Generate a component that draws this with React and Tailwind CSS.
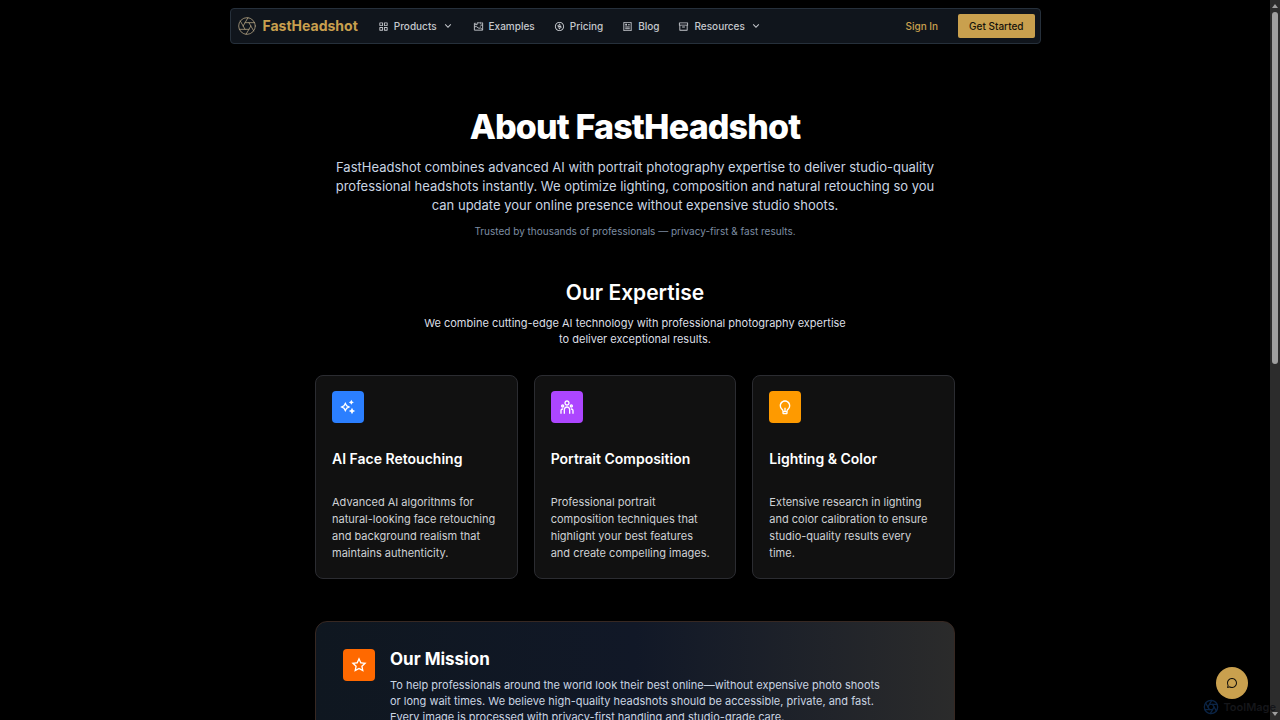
import { Aperture } from 'lucide-react';
import {
  RiArchiveLine,
  RiArrowDownSLine,
  RiArticleLine,
  RiChat3Line,
  RiFunctionLine,
  RiLightbulbLine,
  RiMoneyDollarCircleLine,
  RiSparkling2Line,
  RiStarLine,
  RiTeamLine,
} from 'react-icons/ri';

function ExamplesIcon({ className }) {
  return (
    <svg viewBox="0 0 24 24" fill="none" stroke="currentColor" strokeWidth="2" className={className}>
      <path d="M9 4v4H3v12h18V4h-2M3 8V5h3" />
      <path d="M9 4h6M17 2v5M21 9h-4" />
      <path d="M3 13l4-1 6 4 3-1 5 4M16 10v2" />
    </svg>
  );
}

const navItems = [
  { label: 'Products', icon: RiFunctionLine, menu: true },
  { label: 'Examples', icon: ExamplesIcon },
  { label: 'Pricing', icon: RiMoneyDollarCircleLine },
  { label: 'Blog', icon: RiArticleLine },
  { label: 'Resources', icon: RiArchiveLine, menu: true },
];

const expertise = [
  {
    title: 'AI Face Retouching',
    icon: RiSparkling2Line,
    color: 'bg-[#2b7fff]',
    text: 'Advanced AI algorithms for natural-looking face retouching and background realism that maintains authenticity.',
  },
  {
    title: 'Portrait Composition',
    icon: RiTeamLine,
    color: 'bg-[#ad46ff]',
    // non-breaking space keeps "and create" together on the last line
    text: 'Professional portrait composition techniques that highlight your best features and\u00a0create compelling images.',
  },
  {
    title: 'Lighting & Color',
    icon: RiLightbulbLine,
    color: 'bg-[#fe9a00]',
    text: 'Extensive research in lighting and color calibration to ensure studio-quality results every time.',
  },
];

function IconTile({ icon: Icon, color }) {
  return (
    <div className={`flex size-8 shrink-0 items-center justify-center rounded-sm text-white ${color}`}>
      <Icon className="size-4" />
    </div>
  );
}

function NavItem({ label, icon: Icon, menu }) {
  const Tag = menu ? 'button' : 'a';
  return (
    <Tag
      href={menu ? undefined : '#'}
      className="flex items-center gap-[5px] text-[10px] font-medium text-[#c5c8cd]"
    >
      <Icon className="size-[11px]" />
      {label}
      {menu && <RiArrowDownSLine className="size-3" />}
    </Tag>
  );
}

function Navbar() {
  return (
    <header className="mx-auto mt-2 flex h-9 w-full max-w-[811px] items-center rounded-sm border border-[#26303b] bg-[#10151c] pr-[5px] pl-[6px]">
      <a href="#" className="flex items-center gap-1.5 text-sm font-bold text-[#c9a04e]">
        <Aperture className="size-5 text-[#a99a7c]" strokeWidth={1} />
        FastHeadshot
      </a>
      <nav className="ml-5 flex items-center gap-[19px]">
        {navItems.map((item) => (
          <NavItem key={item.label} {...item} />
        ))}
      </nav>
      <div className="ml-auto flex items-center gap-5 text-[10px] font-medium">
        <a href="#" className="text-[#c9a04e]">Sign In</a>
        <button className="h-6 rounded-xs bg-[#c9a04e] px-[11px] text-[#15120c]">Get Started</button>
      </div>
    </header>
  );
}

function Scrollbar() {
  return (
    <div className="flex w-[10px] shrink-0 flex-col items-center justify-between bg-[#2c2c2c] py-1">
      <div className="flex flex-col items-center gap-1">
        <div className="border-x-3 border-b-4 border-x-transparent border-b-[#9f9f9f]" />
        <div className="h-[352px] w-[6px] rounded-full bg-[#9f9f9f]" />
      </div>
      <div className="border-x-3 border-t-4 border-x-transparent border-t-[#9f9f9f]" />
    </div>
  );
}

export default function App() {
  return (
    <div className="relative flex h-screen overflow-hidden bg-black font-['Inter',sans-serif] text-white">
      <div className="min-w-0 flex-1 overflow-hidden">
        <Navbar />
        <main className="mx-auto max-w-[640px] pt-16">
          <section className="text-center">
            <h1 className="text-[34px] leading-[38px] font-extrabold tracking-tight">About FastHeadshot</h1>
            <p className="mt-3 text-[13px] leading-[19px] text-[#cad5e2]">
              FastHeadshot combines advanced AI with portrait photography expertise to deliver studio-quality
              <br />
              professional headshots instantly. We optimize lighting, composition and natural retouching so you
              <br />
              can update your online presence without expensive studio shoots.
            </p>
            <p className="mt-2 text-[10px] leading-4 text-[#7d8da3]">
              Trusted by thousands of professionals — privacy-first &amp; fast results.
            </p>
          </section>

          <section className="mt-10">
            <div className="text-center">
              <h2 className="text-[21px] leading-7 font-semibold">Our Expertise</h2>
              <p className="mt-2 text-[11px] leading-4 text-[#dcdfe4]">
                We combine cutting-edge AI technology with professional photography expertise
                <br />
                to deliver exceptional results.
              </p>
            </div>
            <div className="mt-7 grid grid-cols-3 gap-4">
              {expertise.map(({ title, text, icon, color }) => (
                <article key={title} className="rounded-lg border border-[#2b2c31] bg-[#111111] p-4 pt-[15px]">
                  <IconTile icon={icon} color={color} />
                  <h3 className="mt-[26px] text-sm leading-5 font-semibold">{title}</h3>
                  <p className="mt-[25px] text-[11px] leading-[17px] text-[#cfd1d5]">{text}</p>
                </article>
              ))}
            </div>
          </section>

          <section className="mt-[42px] flex gap-[15px] rounded-xl border border-[#372822] bg-linear-to-r from-[#0f1720] from-0% via-[#111827] via-50% to-[#2b2b2b] p-[27px]">
            <IconTile icon={RiStarLine} color="bg-[#ff6900]" />
            <div>
              <h2 className="text-[17px] leading-5 font-bold">Our Mission</h2>
              <p className="mt-2 text-[11px] leading-4 text-[#cad5e2]">
                To help professionals around the world look their best online—without expensive photo shoots
                <br />
                or long wait times. We believe high-quality headshots should be accessible, private, and fast.
                <br />
                Every image is processed with privacy-first handling and studio-grade care.
              </p>
            </div>
          </section>
        </main>
      </div>
      <Scrollbar />

      <div className="absolute right-1 bottom-[5px] flex items-center gap-1 text-[11px] leading-4 font-semibold text-[#15161a]">
        <Aperture className="size-4 text-[#0b2445]" />
        ToolMage
      </div>
      <button
        aria-label="Open chat"
        className="absolute right-8 bottom-[21px] flex size-8 items-center justify-center rounded-full bg-[#c9a04e] text-[#15120c]"
      >
        <RiChat3Line className="size-3" />
      </button>
    </div>
  );
}
